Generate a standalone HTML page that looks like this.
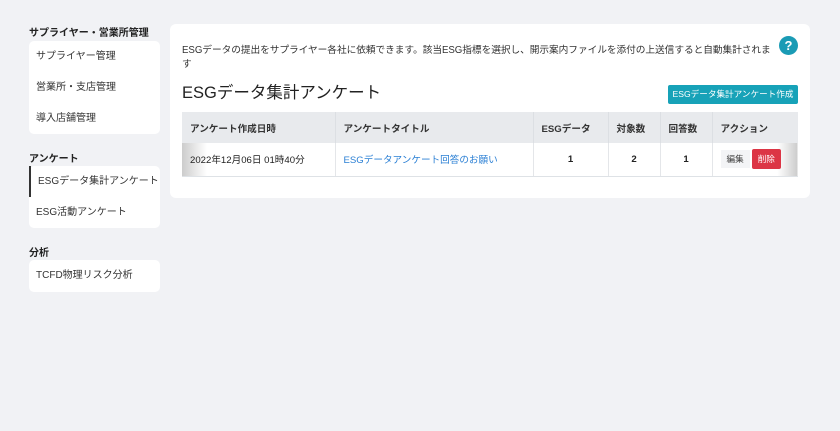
<!DOCTYPE html><html><head><meta charset="utf-8"><style>
*{box-sizing:border-box;margin:0;padding:0}
body{width:840px;height:431px;background:#f1f2f5;font-family:"Liberation Sans","Noto Sans CJK JP",sans-serif;color:#222;position:relative;overflow:hidden}
.h{position:absolute;left:29px;font-size:10px;font-weight:bold;color:#222}
.box{position:absolute;left:29px;width:131px;background:#fff;border-radius:5px}
.it{height:31px;line-height:31px;padding-left:7px;font-size:10px;color:#333}
.act{border-left:2px solid #333;padding-left:7px}
.card{position:absolute;left:170px;top:24px;width:640px;height:174px;background:#fff;border-radius:6px}
.desc{position:absolute;left:12px;top:20px;white-space:nowrap;font-size:9.7px;letter-spacing:-0.05px;line-height:14px;color:#333}
.help{position:absolute;left:609px;top:12px;width:19px;height:19px;border-radius:50%;background:#1a9bb5;color:#fff;font-weight:bold;font-size:13px;text-align:center;line-height:19px}
.title{position:absolute;left:12px;top:55px;font-size:16.5px;color:#222}
.btn{position:absolute;left:498px;top:61px;width:130px;height:19px;background:#17a2b8;border-radius:2px;color:#fff;font-size:8.6px;text-align:center;line-height:19px}
table{position:absolute;left:12px;top:88px;width:616px;border-collapse:collapse;font-size:9.6px}
th{background:#e8eaed;height:31px;text-align:left;padding-left:8px;font-weight:bold;color:#333;border-right:1px solid #dcdfe3}
td{height:33px;padding-left:8px;border-right:1px solid #e4e6e9;border-bottom:1px solid #dee2e6;color:#222}
.c{text-align:center;padding-left:0;font-weight:bold}
a{color:#2a7fd4;text-decoration:none}
.ed{display:inline-block;padding:3px 6px;background:#f3f4f6;color:#444;font-size:8.6px}
.del{display:inline-block;padding:4px 6px;background:#dc3545;color:#fff;font-size:8.6px;border-radius:2px;margin-left:2px}
</style></head><body>
<div class="h" style="top:24px">サプライヤー・営業所管理</div>
<div class="box" style="top:41px;height:93px">
<div class="it">サプライヤー管理</div><div class="it">営業所・支店管理</div><div class="it">導入店舗管理</div></div>
<div class="h" style="top:150px">アンケート</div>
<div class="box" style="top:166px;height:62px">
<div class="it act">ESGデータ集計アンケート</div><div class="it">ESG活動アンケート</div></div>
<div class="h" style="top:244px">分析</div>
<div class="box" style="top:260px;height:32px"><div class="it">TCFD物理リスク分析</div></div>
<div class="card">
<div class="desc">ESGデータの提出をサプライヤー各社に依頼できます。該当ESG指標を選択し、開示案内ファイルを添付の上送信すると自動集計されま<br>す</div>
<div class="help">?</div>
<div class="title">ESGデータ集計アンケート</div>
<div class="btn">ESGデータ集計アンケート作成</div>
<table><tr><th style="width:153px">アンケート作成日時</th><th style="width:198px">アンケートタイトル</th><th style="width:75px">ESGデータ</th><th style="width:52px">対象数</th><th style="width:52px">回答数</th><th style="border-right:none">アクション</th></tr>
<tr><td style="background:linear-gradient(90deg,#ccc,#fff 25px)">2022年12月06日 01時40分</td><td><a>ESGデータアンケート回答のお願い</a></td><td class="c">1</td><td class="c">2</td><td class="c">1</td><td style="border-right:none;background:linear-gradient(270deg,#ccc,#fff 20px)"><span class="ed">編集</span><span class="del">削除</span></td></tr></table>
</div>
</body></html>
